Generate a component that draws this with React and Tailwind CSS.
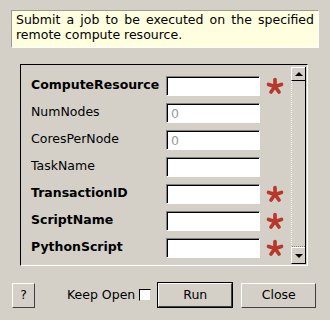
import React from 'react';

const font = { fontFamily: '"DejaVu Sans", Verdana, sans-serif' };

function Star() {
  const angles = [-90, -18, 54, 126, 198];
  return (
    <svg width="18" height="18" viewBox="0 0 18 18" className="block">
      {angles.map((a) => {
        const r = (a * Math.PI) / 180;
        return (
          <line
            key={a}
            x1="9"
            y1="9.5"
            x2={9 + Math.cos(r) * 6.8}
            y2={9.5 + Math.sin(r) * 6.8}
            stroke="#b8382c"
            strokeWidth="3.7"
            strokeLinecap="round"
          />
        );
      })}
    </svg>
  );
}

function Entry({ placeholder }) {
  return (
    <div className="w-[94px] h-[20px] border-t border-l border-[#808080] border-b border-r border-b-white border-r-white">
      <div className="h-full border-t border-l border-black bg-white pl-[3px] text-[12.5px] leading-[17px] text-[#9a9a9a]">
        {placeholder}
      </div>
    </div>
  );
}

const rows = [
  { label: 'ComputeResource', bold: true, req: true },
  { label: 'NumNodes', ph: '0' },
  { label: 'CoresPerNode', ph: '0' },
  { label: 'TaskName' },
  { label: 'TransactionID', bold: true, req: true },
  { label: 'ScriptName', bold: true, req: true },
  { label: 'PythonScript', bold: true, req: true },
];

function Raised({ className, children }) {
  return (
    <div className={`border-t border-l border-white border-b border-r border-b-[#404040] border-r-[#404040] flex items-center justify-center text-[12.5px] text-black ${className}`}>
      {children}
    </div>
  );
}

export default function App() {
  return (
    <div className="w-[330px] h-[320px] bg-[#d4d0c8] relative overflow-hidden text-black" style={font}>
      <div className="absolute left-0 top-0 w-full h-full flex flex-col">
        <div className="ml-[11px] mt-[10px] w-[308px] h-[38px] bg-[#ffffe0] border-t border-l border-[#9a9a9a] border-b border-r border-b-white border-r-white px-[4px] pt-[1px] text-[12.5px] leading-[15px] text-justify [text-align-last:left]">
          Submit a job to be executed on the specified remote compute resource.
        </div>

        <div className="ml-[20px] mt-[16px] w-[288px] h-[202px] border-t border-l border-black border-b border-r border-b-white border-r-white flex">
          <div className="flex-1 pt-[7px] pl-[10px]">
            {rows.map((r) => (
              <div key={r.label} className="h-[27px] flex items-center">
                <div className={`w-[135px] text-[12.5px] ${r.bold ? 'font-bold' : ''}`}>{r.label}</div>
                <Entry placeholder={r.ph} />
                <div className="ml-[6px] w-[18px]">{r.req && <Star />}</div>
              </div>
            ))}
          </div>
          <div className="w-[15px] mt-[2px] mb-[1px] mr-[1px] flex flex-col border-r border-black">
            <div className="h-[14px] border-t border-l border-white border-b border-b-black flex items-center justify-center">
              <div className="w-0 h-0 border-l-[4px] border-r-[4px] border-b-[4px] border-l-transparent border-r-transparent border-b-black" />
            </div>
            <div className="flex-1 border-l border-white border-b border-b-[#808080] border-dotted" />
            <div className="h-[17px] border-t border-l border-white border-b border-b-black flex items-center justify-center">
              <div className="w-0 h-0 border-l-[4px] border-r-[4px] border-t-[4px] border-l-transparent border-r-transparent border-t-black" />
            </div>
          </div>
        </div>

        <div className="mt-[16px] flex items-center h-[26px]">
          <Raised className="ml-[12px] w-[23px] h-[25px]">?</Raised>
          <span className="ml-[32px] text-[12.5px]">Keep Open</span>
          <div className="ml-[4px] w-[12px] h-[12px] bg-white border-t border-l border-black border-b border-r border-b-[#d4d0c8] border-r-[#d4d0c8]" />
          <div className="ml-[6px] w-[76px] h-[26px] border border-black">
            <Raised className="w-full h-full">Run</Raised>
          </div>
          <Raised className="ml-[8px] w-[75px] h-[25px]">Close</Raised>
        </div>
      </div>
    </div>
  );
}
